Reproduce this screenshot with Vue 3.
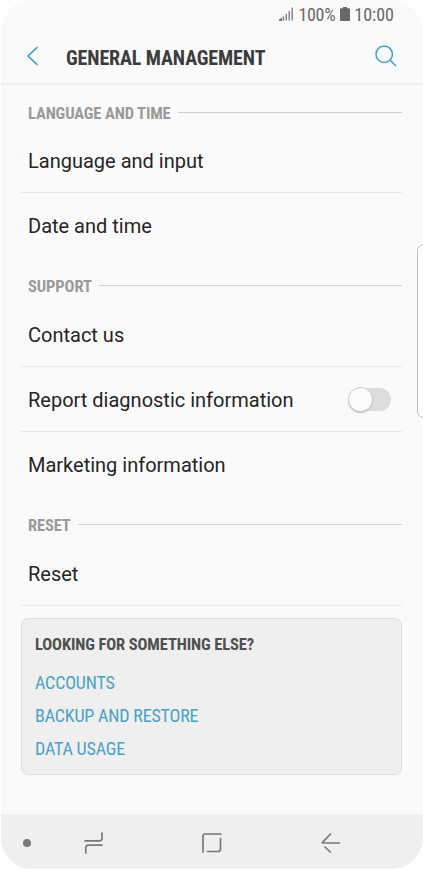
<script setup>
import { ref } from 'vue';

const reportEnabled = ref(false);

const sections = [
  { title: 'LANGUAGE AND TIME', key: 'language', items: [{ label: 'Language and input' }, { label: 'Date and time' }] },
  {
    title: 'SUPPORT',
    key: 'support',
    items: [
      { label: 'Contact us' },
      { label: 'Report diagnostic information', toggle: true },
      { label: 'Marketing information' },
    ],
  },
  { title: 'RESET', key: 'reset', items: [{ label: 'Reset' }] },
];

const links = ['ACCOUNTS', 'BACKUP AND RESTORE', 'DATA USAGE'];
</script>

<template>
  <div class="phone">
    <div class="status-bar">
      <svg class="signal" viewBox="0 0 15 14">
        <path d="M0 13.500l2.500-2v2zM4.500 13.500V9.500M7.300 13.500V7M10.200 13.500V4M13.200 13.500V.5" />
      </svg>
      <span class="battery-text">100%</span>
      <svg class="battery" viewBox="0 0 10 14">
        <path d="M3 0h4v1.300h2a1 1 0 0 1 1 1V13a1 1 0 0 1-1 1H1a1 1 0 0 1-1-1V2.300a1 1 0 0 1 1-1h2z" />
      </svg>
      <span class="clock">10:00</span>
    </div>

    <header class="app-bar">
      <svg class="back" viewBox="0 0 12 20">
        <path d="M11.500 1L2 10l9.500 9" />
      </svg>
      <h1>GENERAL MANAGEMENT</h1>
      <svg class="search" viewBox="0 0 22 22">
        <circle cx="9.200" cy="9.200" r="8.200" />
        <path d="M15 15l6 6" />
      </svg>
    </header>

    <main class="content">
      <section v-for="section in sections" :key="section.key" :class="['section', section.key]">
        <div class="section-title">
          <h2>{{ section.title }}</h2>
          <span class="rule"></span>
        </div>
        <div v-for="item in section.items" :key="item.label" class="row">
          <span class="label">{{ item.label }}</span>
          <button
            v-if="item.toggle"
            type="button"
            :class="['switch', { on: reportEnabled }]"
            @click="reportEnabled = !reportEnabled"
          >
            <span class="knob"></span>
          </button>
        </div>
      </section>

      <section class="card">
        <h3>LOOKING FOR SOMETHING ELSE?</h3>
        <a v-for="link in links" :key="link">{{ link }}</a>
      </section>
    </main>

    <nav class="nav-bar">
      <span class="dot"></span>
      <svg class="recents" viewBox="0 0 20 22">
        <path d="M1 8.800h14.500q2.500 0 2.500-2.500V1M18 13.200H4.300q-2.500 0-2.500 2.500V21" />
      </svg>
      <svg class="home" viewBox="0 0 20 20">
        <path d="M19 1H3Q1 1 1 3v16M18.500 5.500V16q0 2.500-2.500 2.500H5.500" />
      </svg>
      <svg class="return" viewBox="0 0 20 20">
        <path d="M9.500 1L1.500 9.300q-.5.700.5.700H18.500M4 14l5.300 5" />
      </svg>
    </nav>

    <span class="edge-handle"></span>
  </div>
</template>

<style>
body {
  margin: 0;
  background: #ffffff;
}
</style>

<style scoped>
.phone {
  position: relative;
  display: flex;
  flex-direction: column;
  box-sizing: border-box;
  width: 423px;
  height: 870px;
  overflow: hidden;
  border: 1px solid #ffffff;
  border-width: 0 0 1px 1px;
  border-radius: 32px;
  background: #fafafa;
  font-family: Roboto, "Liberation Sans", sans-serif;
}

svg {
  display: block;
  flex: none;
  fill: none;
}

h1,
h2,
h3 {
  margin: 0;
}

.status-bar,
h1,
h2,
.card {
  font-family: "Roboto Condensed", Roboto, "Liberation Sans", sans-serif;
  font-stretch: 75%;
  white-space: nowrap;
}

.status-bar {
  display: flex;
  align-items: center;
  justify-content: flex-end;
  box-sizing: border-box;
  height: 28px;
  padding-right: 29px;
  color: #686868;
  font-size: 18px;
}

.battery-text {
  letter-spacing: -0.3px;
}

.signal {
  width: 15px;
  height: 14px;
  margin-right: 4px;
  stroke: #777777;
  stroke-width: 1.3;
}

.battery {
  width: 10px;
  height: 14px;
  margin: 0 4px 0 5px;
  fill: #686868;
}

.app-bar {
  display: flex;
  align-items: center;
  box-sizing: border-box;
  height: 57px;
  padding: 1px 26px 0 25px;
  border-bottom: 2px solid #eeeeee;
}

.back {
  width: 12px;
  height: 20px;
  stroke: #459fc3;
  stroke-width: 1.6;
}

h1 {
  flex: 1;
  margin-left: 28px;
  padding-top: 3px;
  color: #3c3c3c;
  font-size: 20px;
  font-weight: 700;
  letter-spacing: -0.12px;
}

.search {
  width: 22px;
  height: 22px;
  stroke: #459fc3;
  stroke-width: 1.5;
}

.content {
  flex: 1;
  padding: 0 21px 0 20px;
}

.section-title {
  display: flex;
  align-items: center;
  gap: 7px;
  box-sizing: border-box;
  height: 44px;
  padding: 11px 0 0 7px;
}

.language .section-title {
  height: 43px;
}

h2 {
  padding-top: 1px;
  color: #9a9a9a;
  font-size: 16.5px;
  font-weight: 700;
  letter-spacing: -0.13px;
  line-height: 31px;
}

.language h2 {
  padding-top: 2px;
}

.rule {
  flex: 1;
  height: 1px;
  background: #cfcfcf;
}

.row {
  display: flex;
  align-items: center;
  justify-content: space-between;
  box-sizing: border-box;
  height: 65px;
  padding: 1px 11px 0 7px;
  border-bottom: 1px solid #e8e8e8;
}

.row:last-child {
  border-bottom-color: transparent;
}

.reset .row {
  border-bottom-color: #e8e8e8;
}

.label {
  color: #252525;
  font-size: 20px;
}

.switch {
  width: 42px;
  height: 23px;
  padding: 0;
  border: 0;
  border-radius: 12px;
  background: #dddddd;
}

.knob {
  display: block;
  box-sizing: border-box;
  width: 25px;
  height: 25px;
  margin: -1px 0 -1px -1px;
  border: 1px solid #cecece;
  border-radius: 50%;
  background: #fcfcfc;
  box-shadow: 0 1px 1px #bdbdbd;
}

.switch.on .knob {
  margin-left: 18px;
}

.card {
  display: flex;
  flex-direction: column;
  box-sizing: border-box;
  height: 157px;
  margin-top: 12px;
  padding: 9px 13px;
  border: 1px solid #dedede;
  border-radius: 7px;
  background: #efefef;
  line-height: 33.3px;
}

h3 {
  margin-bottom: 4.5px;
  color: #505050;
  font-size: 16.5px;
  font-weight: 700;
  letter-spacing: -0.12px;
}

.card a {
  color: #4aa2c3;
  font-size: 18px;
  letter-spacing: -0.18px;
}

.nav-bar {
  display: flex;
  align-items: center;
  box-sizing: border-box;
  height: 55.5px;
  padding: 3px 82px 0 22px;
  background: #efefef;
  stroke: #797979;
  stroke-width: 1.7;
  stroke-linecap: round;
  stroke-linejoin: round;
}

.dot {
  width: 8px;
  height: 8px;
  border-radius: 50%;
  background: #797979;
}

.recents {
  width: 20px;
  height: 22px;
  margin-left: 53px;
}

.home {
  width: 20px;
  height: 20px;
  margin-left: 98px;
}

.return {
  width: 20px;
  height: 20px;
  margin-left: 99px;
}

/* edge panel handle sits over the list on the right side */
.edge-handle {
  position: absolute;
  top: 244px;
  right: -4px;
  box-sizing: border-box;
  width: 10px;
  height: 174px;
  border: 1px solid #bdbdbd;
  border-radius: 7px 0 0 7px;
  background: #ffffff;
}
</style>
